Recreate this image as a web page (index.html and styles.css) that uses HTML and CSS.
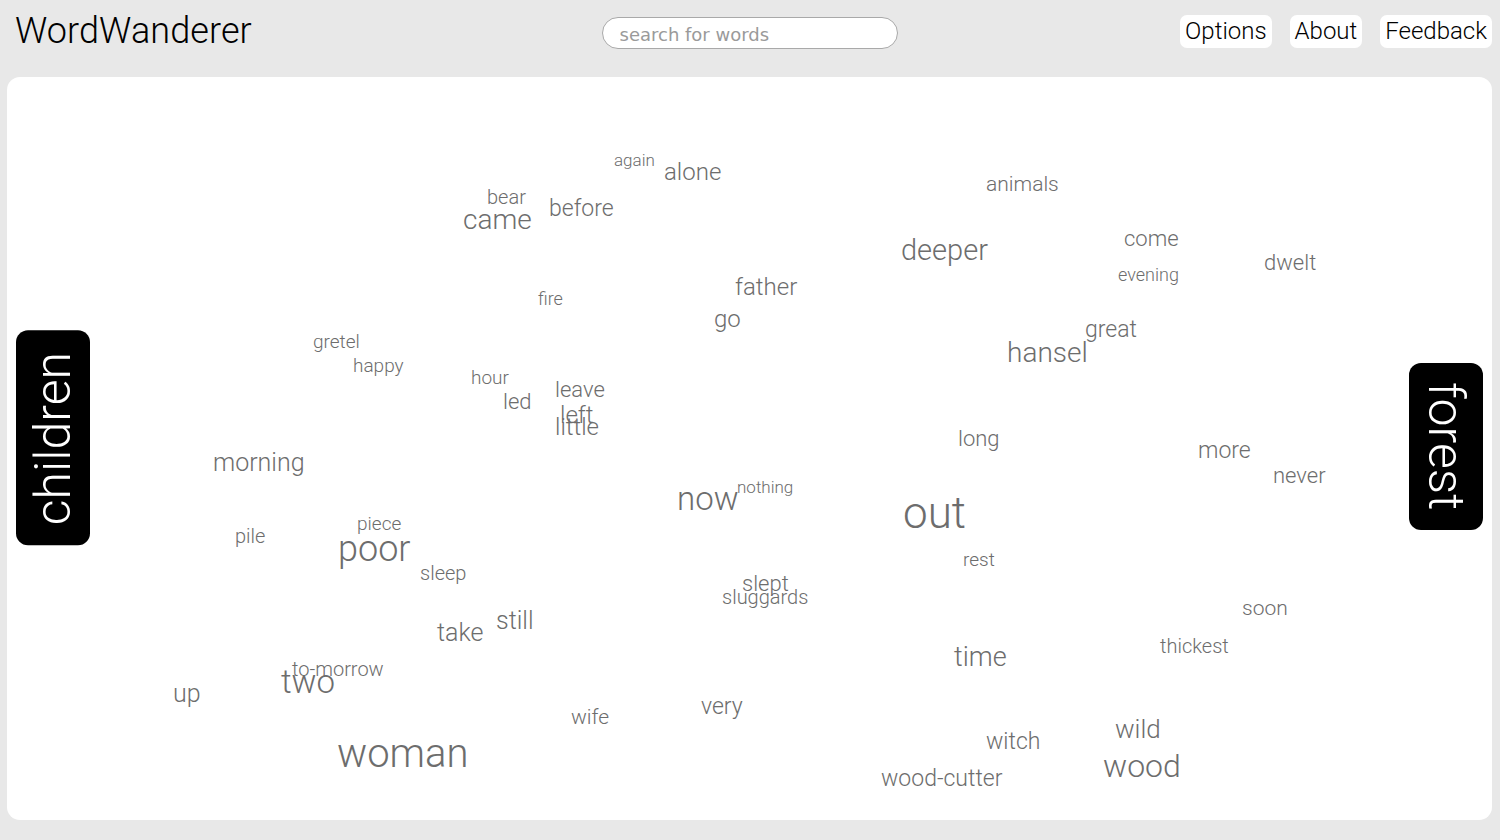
FILE: index.html
```html
<!DOCTYPE html>
<html>
  <head>
    <title>WordWanderer</title>
    <link rel="stylesheet" href="styles.css">
  </head>
  <body>
    <div id="header">
      <h1 class="title">WordWanderer</h1>
      <div class="search-wrap">
        <input type="text" id="search" placeholder="search for words" />
      </div>
      <div class="menu">
        <button>Options</button>
        <button>About</button>
        <button>Feedback</button>
      </div>
    </div>

    <div id="panel">
      <div id="words"></div>
      <div class="pole pole-left">children</div>
      <div class="pole pole-right">forest</div>
    </div>

    <script>
      // word, x, y (centre of the lowercase letters), font size
      const words = [
        ["again", 607, 83, 17],
        ["alone", 657, 94, 24],
        ["animals", 979, 107, 21],
        ["bear", 480, 119, 20],
        ["came", 456, 143, 28],
        ["before", 542, 131, 23],
        ["deeper", 894, 173, 29],
        ["come", 1117, 161, 22],
        ["dwelt", 1257, 185, 22],
        ["evening", 1111, 197, 18],
        ["fire", 531, 221, 18],
        ["father", 728, 209, 24],
        ["go", 707, 241, 24],
        ["gretel", 306, 264, 19],
        ["happy", 346, 288, 19],
        ["hour", 464, 300, 19],
        ["leave", 548, 312, 22],
        ["led", 496, 324, 22],
        ["left", 553, 337, 24],
        ["little", 548, 349, 24],
        ["hansel", 1000, 276, 28],
        ["great", 1078, 252, 23],
        ["long", 951, 361, 22],
        ["more", 1191, 373, 23],
        ["never", 1266, 398, 22],
        ["morning", 206, 385, 25],
        ["now", 670, 421, 33],
        ["nothing", 730, 410, 17],
        ["out", 896, 436, 44],
        ["piece", 350, 446, 19],
        ["pile", 228, 458, 20],
        ["poor", 331, 472, 36],
        ["sleep", 413, 495, 20],
        ["rest", 956, 482, 19],
        ["slept", 735, 506, 22],
        ["sluggards", 715, 519, 20],
        ["soon", 1235, 531, 21],
        ["take", 430, 555, 25],
        ["still", 489, 543, 25],
        ["thickest", 1153, 568, 20],
        ["time", 947, 580, 27],
        ["to-morrow", 285, 591, 20],
        ["two", 274, 604, 33],
        ["up", 166, 616, 25],
        ["very", 694, 629, 23],
        ["wife", 564, 640, 21],
        ["witch", 979, 664, 23],
        ["wild", 1108, 652, 26],
        ["wood", 1096, 689, 32],
        ["wood-cutter", 874, 701, 23],
        ["woman", 330, 677, 40],
      ];

      const canvas = document.getElementById("words");
      words.forEach(([text, x, y, size]) => {
        const span = document.createElement("span");
        span.className = "word";
        span.textContent = text;
        span.style.left = x + "px";
        span.style.top = Math.round(y + 1 - size * 0.52) + "px";
        span.style.fontSize = size + "px";
        canvas.appendChild(span);
      });
    </script>
  </body>
</html>
```

FILE: styles.css
```css
body {
  margin: 0;
  padding: 0 8px 20px 7px;
  background-color: #e8e8e8;
  font-family: Roboto, "Liberation Sans", sans-serif;
  height: 840px;
  box-sizing: border-box;
}
#header {
  display: grid;
  grid-template-columns: 1fr auto 1fr;
  align-items: center;
  height: 62px;
  margin-bottom: 15px;
}
.title {
  margin: 0;
  padding-left: 8px;
  font-size: 36px;
  font-weight: 300;
  color: #000;
  letter-spacing: 0.1px;
}
.search-wrap {
  padding-top: 4px;
}
#search {
  box-sizing: border-box;
  width: 296px;
  height: 32px;
  padding: 2px 17px 0;
  border: 1.5px solid #a9a9a9;
  border-radius: 16px;
  background-color: #fff;
  font-family: "DejaVu Sans", sans-serif;
  font-size: 18px;
  color: #555;
  outline: none;
}
#search::placeholder {
  color: #9a9a9a;
}
.menu {
  display: flex;
  justify-content: flex-end;
  gap: 18px;
}
.menu button {
  padding: 0 5px;
  height: 33px;
  background-color: #fff;
  color: #000;
  border: none;
  border-radius: 7px;
  font-family: Roboto, "Liberation Sans", sans-serif;
  font-size: 24px;
  font-weight: 300;
  cursor: pointer;
}
#panel {
  position: relative;
  display: flex;
  justify-content: space-between;
  align-items: center;
  height: 743px;
  padding: 0 9px;
  background-color: #fff;
  border-radius: 13px;
}
#words {
  position: absolute;
  inset: 0;
}
.word {
  position: absolute;
  line-height: 1;
  white-space: nowrap;
  color: #6d6d6d;
  font-weight: 300;
}
.pole {
  position: relative;
  writing-mode: vertical-rl;
  background-color: #000;
  color: #fff;
  font-size: 50px;
  font-weight: 300;
  line-height: 74px;
  width: 74px;
  border-radius: 12px;
  text-align: center;
}
.pole-left {
  transform: rotate(180deg);
  padding: 20px 0 22px;
  margin-bottom: 22px;
}
.pole-right {
  padding: 19px 0 20px;
  margin-bottom: 4px;
}
```
